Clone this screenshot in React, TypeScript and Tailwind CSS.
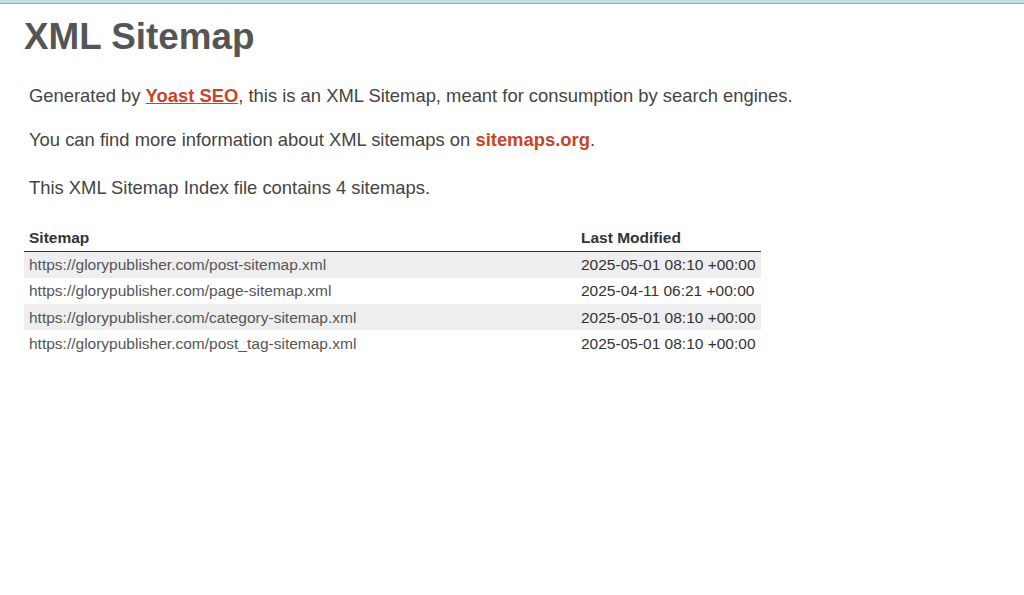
const sitemaps = [
  { loc: "https://glorypublisher.com/post-sitemap.xml", lastmod: "2025-05-01 08:10 +00:00" },
  { loc: "https://glorypublisher.com/page-sitemap.xml", lastmod: "2025-04-11 06:21 +00:00" },
  { loc: "https://glorypublisher.com/category-sitemap.xml", lastmod: "2025-05-01 08:10 +00:00" },
  { loc: "https://glorypublisher.com/post_tag-sitemap.xml", lastmod: "2025-05-01 08:10 +00:00" },
];

export default function App() {
  return (
    <div className="min-h-[595px] bg-white font-['Liberation_Sans',Arial,sans-serif] text-[#444]">
      <div className="h-[3px] bg-[#bfe0e2]" />
      <div className="h-px bg-[#9aa9ab]" />
      <div className="px-6 pt-[11px]">
        <h1 className="text-[36.8px] font-bold leading-[44px] text-[#555]">XML Sitemap</h1>
        <div className="px-[5px] pt-[26px] text-[18.4px] leading-[22px]">
          <p>
            Generated by{" "}
            <a href="#" className="font-bold text-[#c9432a] underline">
              Yoast SEO
            </a>
            , this is an XML Sitemap, meant for consumption by search engines.
          </p>
          <p className="mt-[22px]">
            You can find more information about XML sitemaps on{" "}
            <a href="#" className="font-bold text-[#c9432a]">
              sitemaps.org
            </a>
            .
          </p>
          <p className="mt-[26px]">This XML Sitemap Index file contains 4 sitemaps.</p>
        </div>
        <table className="mt-[29px] w-[737px] border-collapse text-[15.5px]">
          <thead>
            <tr className="border-b border-[#333]">
              <th className="w-[552px] px-[5px] pb-[3px] text-left font-bold leading-[20px] text-[#333]">Sitemap</th>
              <th className="px-[5px] pb-[3px] text-left font-bold leading-[20px] text-[#333]">Last Modified</th>
            </tr>
          </thead>
          <tbody>
            {sitemaps.map((s, i) => (
              <tr key={s.loc} className={i % 2 === 0 ? "bg-[#eee]" : ""}>
                <td className="h-[26.3px] px-[5px] text-[#555]">
                  <a href="#">{s.loc}</a>
                </td>
                <td className="px-[5px] text-[#333]">{s.lastmod}</td>
              </tr>
            ))}
          </tbody>
        </table>
      </div>
    </div>
  );
}
